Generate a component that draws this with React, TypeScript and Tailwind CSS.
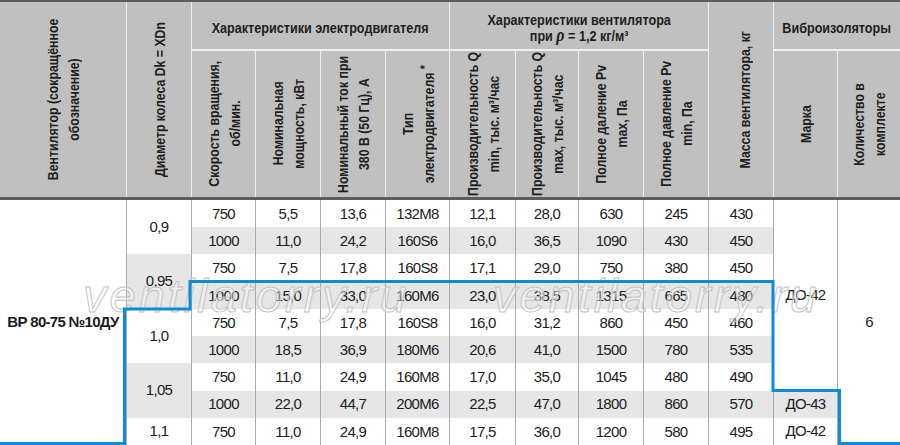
import React from "react";

const COLS =
  "grid-cols-[126px_64px_63px_64px_64px_63px_65px_62px_64px_64px_64px_63px_62px]";

const HF = "font-['Liberation_Sans','Arial',sans-serif] font-bold text-[15px] text-[#1e1e1e]";
const BF = "font-['Liberation_Sans','Arial',sans-serif] text-[15px] tracking-[-0.7px] text-[#1c1c1c]";

function V({ children }: { children: React.ReactNode }) {
  return (
    <span className="[writing-mode:vertical-rl] rotate-180 scale-y-82 text-center leading-[21px] whitespace-nowrap">
      {children}
    </span>
  );
}

function H({ children }: { children: React.ReactNode }) {
  return (
    <span className="scale-x-84 text-center leading-[15px] whitespace-nowrap">{children}</span>
  );
}

const data: string[][] = [
  ["750", "5,5", "13,6", "132M8", "12,1", "28,0", "630", "245", "430"],
  ["1000", "11,0", "24,2", "160S6", "16,0", "36,5", "1090", "430", "450"],
  ["750", "7,5", "17,8", "160S8", "17,1", "29,0", "750", "380", "450"],
  ["1000", "15,0", "33,0", "160M6", "23,0", "38,5", "1315", "665", "480"],
  ["750", "7,5", "17,8", "160S8", "16,0", "31,2", "860", "450", "460"],
  ["1000", "18,5", "36,9", "180M6", "20,6", "41,0", "1500", "780", "535"],
  ["750", "11,0", "24,9", "160M8", "17,0", "35,0", "1045", "480", "490"],
  ["1000", "22,0", "44,7", "200M6", "22,5", "47,0", "1800", "860", "570"],
  ["750", "11,0", "24,9", "160M8", "17,5", "36,0", "1200", "580", "495"],
];

const diam: Record<number, { label: string; span: string; grey: boolean }> = {
  0: { label: "0,9", span: "row-span-2", grey: false },
  2: { label: "0,95", span: "row-span-2", grey: true },
  4: { label: "1,0", span: "row-span-2", grey: false },
  6: { label: "1,05", span: "row-span-2", grey: true },
  8: { label: "1,1", span: "row-span-1", grey: false },
};

function Cell({
  children,
  grey,
  className = "",
}: {
  children?: React.ReactNode;
  grey?: boolean;
  className?: string;
}) {
  return (
    <div
      className={`flex items-center justify-center ${grey ? "bg-[#e6e6e6]" : "bg-white"} ${className}`}
    >
      {children}
    </div>
  );
}

function HC({ children, className = "" }: { children: React.ReactNode; className?: string }) {
  return (
    <div className={`bg-[#c0c0c0] flex items-center justify-center overflow-visible min-w-0 ${className}`}>
      {children}
    </div>
  );
}

export default function App() {
  const body: React.ReactNode[] = [];
  data.forEach((row, i) => {
    const grey = i % 2 === 1;
    if (i === 0) {
      body.push(
        <Cell key="name" className="row-span-9">
          <span className="font-bold text-[15px] tracking-[-0.7px]">ВР 80-75 №10ДУ</span>
        </Cell>
      );
    }
    if (diam[i]) {
      body.push(
        <Cell key={`d${i}`} grey={diam[i].grey} className={diam[i].span}>
          {diam[i].label}
        </Cell>
      );
    }
    row.forEach((v, j) => {
      body.push(
        <Cell key={`c${i}-${j}`} grey={grey} className="pt-[1px]">
          {v}
        </Cell>
      );
    });
    if (i === 0) {
      body.push(
        <Cell key="m1" className="row-span-7">
          ДО-42
        </Cell>
      );
      body.push(
        <Cell key="qty" className="row-span-9">
          6
        </Cell>
      );
    }
    if (i === 7) {
      body.push(
        <Cell key="m2" grey>
          ДО-43
        </Cell>
      );
    }
    if (i === 8) {
      body.push(<Cell key="m3">ДО-42</Cell>);
    }
  });

  return (
    <div className="relative w-[900px] h-[445px] overflow-hidden bg-white">
      {/* Header */}
      <div
        className={`grid ${COLS} grid-rows-[47px_146px] gap-x-px gap-y-[2px] bg-[#efefef] border-t-2 border-b-[3px] border-[#5c5c5c] ${HF}`}
      >
        <HC className="row-span-2">
          <V>
            Вентилятор (сокращённое
            <br />
            обозначение)
          </V>
        </HC>
        <HC className="row-span-2">
          <V>Диаметр колеса Dk = XDn</V>
        </HC>
        <HC className="col-span-4 pt-[3px]">
          <H>Характеристики электродвигателя</H>
        </HC>
        <HC className="col-span-4 pt-[3px]">
          <H>
            Характеристики вентилятора
            <br />
            при <span className="font-['Liberation_Serif',serif] italic text-[19px] leading-[15px]">ρ</span> = 1,2 кг/м³
          </H>
        </HC>
        <HC className="row-span-2 pl-[6px]">
          <V>Масса вентилятора, кг</V>
        </HC>
        <HC className="col-span-2 pt-[3px]">
          <H>Виброизоляторы</H>
        </HC>
        <HC>
          <V>
            Скорость вращения,
            <br />
            об/мин.
          </V>
        </HC>
        <HC>
          <V>
            Номинальная
            <br />
            мощность, кВт
          </V>
        </HC>
        <HC>
          <V>
            Номинальный ток при
            <br />
            380 В (50 Гц), А
          </V>
        </HC>
        <HC>
          <V>
            Тип
            <br />
            электродвигателя <span className="relative left-[4px] text-[13px]">*</span>
          </V>
        </HC>
        <HC>
          <V>
            Производительность Q
            <br />
            min, тыс. м³/час
          </V>
        </HC>
        <HC>
          <V>
            Производительность Q
            <br />
            max, тыс. м³/час
          </V>
        </HC>
        <HC>
          <V>
            Полное даление Pv
            <br />
            max, Па
          </V>
        </HC>
        <HC>
          <V>
            Полное давление Pv
            <br />
            min, Па
          </V>
        </HC>
        <HC>
          <V>Марка</V>
        </HC>
        <HC>
          <V>
            Количество в
            <br />
            комплекте
          </V>
        </HC>
      </div>

      {/* Body */}
      <div className={`grid ${COLS} grid-rows-9 h-[245px] gap-x-px bg-[#a9a9a9] ${BF}`}>
        {body}
      </div>

      {/* Watermarks */}
      <span className="absolute left-[83px] top-[272px] font-['Liberation_Sans',sans-serif] italic text-[47px] leading-none tracking-[3px] text-white/40 [-webkit-text-stroke:1px_#c4c4c4] pointer-events-none whitespace-nowrap">
        ventilatorry.ru
      </span>
      <span className="absolute left-[493px] top-[272px] font-['Liberation_Sans',sans-serif] italic text-[47px] leading-none tracking-[3px] text-white/40 [-webkit-text-stroke:1px_#c4c4c4] pointer-events-none whitespace-nowrap">
        ventilatorry.ru
      </span>

      {/* Blue outline */}
      <svg
        className="absolute left-0 top-0 pointer-events-none"
        width="900"
        height="445"
        viewBox="0 0 900 445"
      >
        <polyline
          points="0,443.5 124.5,443.5 124.5,309 190,309 190,281.5 773,281.5 773,390.5 839.5,390.5 839.5,443.5 900,443.5"
          fill="none"
          stroke="#0b8bdb"
          strokeWidth="3"
          strokeLinejoin="miter"
        />
      </svg>
    </div>
  );
}
